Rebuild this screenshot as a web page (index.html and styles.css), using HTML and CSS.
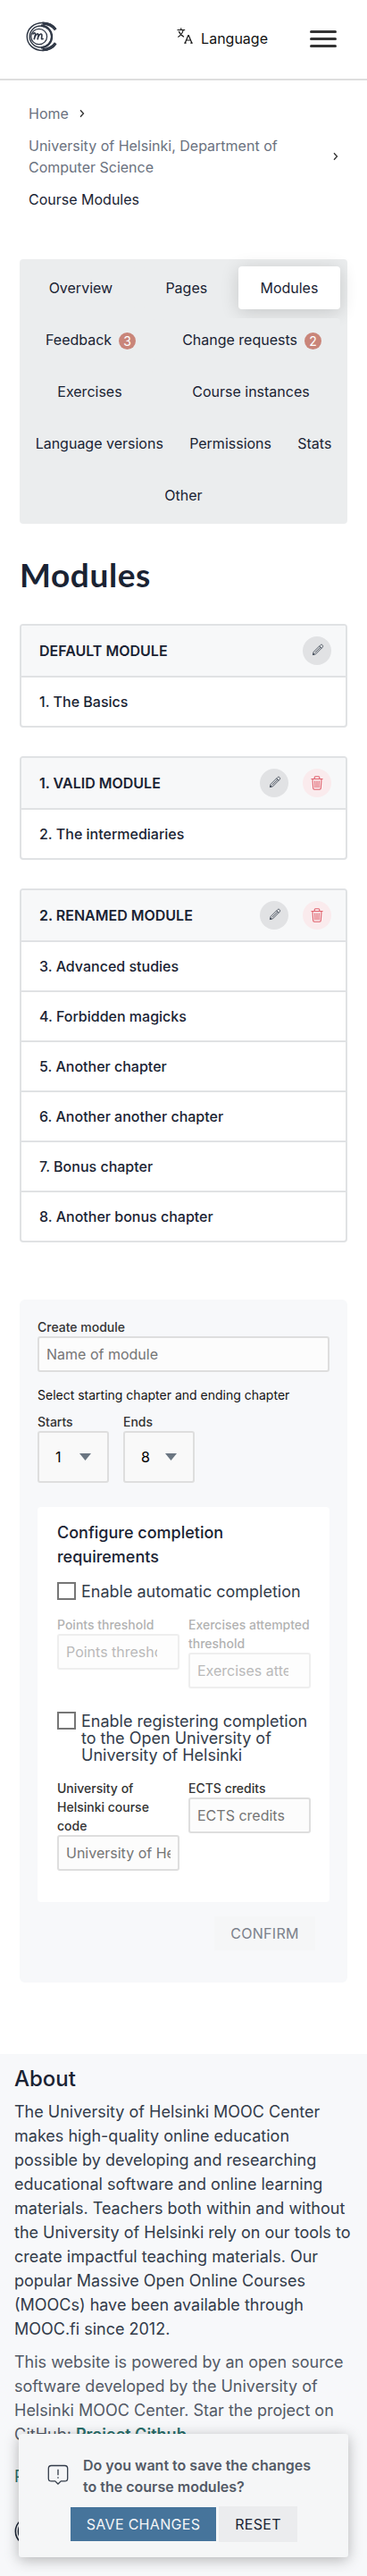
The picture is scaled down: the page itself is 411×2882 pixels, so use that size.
FILE: index.html
```html
<!DOCTYPE html>
<html lang="en">
<head>
<meta charset="utf-8">
<title>Course Modules</title>
<link rel="stylesheet" href="styles.css">
</head>
<body>
<svg class="defs" aria-hidden="true">
  <symbol id="pencil" viewBox="0 0 16 16">
    <path d="M1.600 14.400l.9-3.700L11.200 2c.8-.8 2-.8 2.700 0s.8 1.900 0 2.700L5.200 13.500zM4.300 11.800l7.300-7.300M9.900 3.400l2.700 2.700M1.700 14.300l.5-1.800 1.300 1.300z" fill="none" stroke="currentColor" stroke-width="1.100"/>
  </symbol>
  <symbol id="trash" viewBox="0 0 16 16">
    <path d="M1.500 3.500h13M5.200 3.500V1.800Q5.200.8 6.200.8h3.600q1 0 1 1v1.700M3 3.500l.7 10.400q.1 1.300 1.300 1.300h6q1.200 0 1.300-1.300L13 3.500M5.700 5.500l.2 7.800M8 5.500v7.800M10.300 5.500l-.2 7.800" fill="none" stroke="currentColor" stroke-width="1.100"/>
  </symbol>
  <symbol id="mooc" viewBox="0 0 36 34">
    <g fill="none" stroke="currentColor">
      <path d="M33.500 8.500C30.500 4 25.500 1.500 19 1.500 9 1.500 1.300 8 1.300 17S9 32.400 19 32.400c6.500 0 11.500-2.500 14.500-7.300" stroke-width="1.500"/>
      <path d="M33.300 9.300C30 4.700 25 2.300 18.500 2.200M33.300 24.300c-3.300 4.600-8.300 7.200-14.800 7.300" stroke-width="3.200"/>
      <ellipse cx="16.500" cy="17" rx="12.300" ry="12" stroke-width="1.400"/>
      <path d="M17 4.500c7.500 1 12 6 12 12.500S24.500 28.500 17 29.500" stroke-width="2.300"/>
      <ellipse cx="14.700" cy="17" rx="8.900" ry="8.700" stroke-width="1.300"/>
      <path d="M7.500 14.500c1.500-2.500 3.500-2 3 .5l-1.300 5.300M10 17.500c1.500-4 4.300-4.800 4-1.500l-.9 4.300M14 17c1.500-3.700 4.300-4 3.800-.7-.4 2.700-.7 4.200 1.900 3" stroke-width="1.700"/>
    </g>
  </symbol>
</svg>

<header class="topbar">
  <svg class="logo"><use href="#mooc"/></svg>
  <div class="topbar-right">
    <div class="language">
      <svg class="lang-icon" viewBox="0 0 18 18" fill="none" stroke="currentColor" stroke-width="1.100">
        <path d="M.5 2.500h8.700M4.800.3v2.200M7.200 2.700C6.500 6 4.500 8.600 1.300 10.400M2.300 4c1 2.700 3.200 5 5.700 6.300"/>
        <path d="M9.300 17l3.500-8.500h.5L16.800 17M10.500 14h5M8.300 17.200h2.300M15.300 17.200h2.400" stroke-width="1.200"/>
      </svg>
      <span>Language</span>
    </div>
    <div class="burger"><i></i><i></i><i></i></div>
  </div>
</header>

<nav class="crumbs">
  <div class="crumb"><span>Home</span><svg class="chev" viewBox="0 0 6 10"><path d="M1 1.200l3.500 3.800L1 8.800"/></svg></div>
  <div class="crumb"><span>University of Helsinki, Department of Computer Science</span><svg class="chev far" viewBox="0 0 6 10"><path d="M1 1.200l3.500 3.800L1 8.800"/></svg></div>
  <div class="crumb current"><span>Course Modules</span></div>
</nav>

<main class="content">
  <div class="tabs">
    <a class="tab">Overview</a>
    <a class="tab">Pages</a>
    <a class="tab active">Modules</a>
    <a class="tab">Feedback<b class="badge">3</b></a>
    <a class="tab">Change requests<b class="badge">2</b></a>
    <a class="tab">Exercises</a>
    <a class="tab">Course instances</a>
    <a class="tab">Language versions</a>
    <a class="tab">Permissions</a>
    <a class="tab">Stats</a>
    <a class="tab">Other</a>
  </div>

  <h1 class="title">Modules</h1>

  <section class="module">
    <div class="module-head"><h2>Default module</h2><button class="round"><svg><use href="#pencil"/></svg></button></div>
    <div class="chapter">1. The Basics</div>
  </section>
  <section class="module">
    <div class="module-head"><h2>1. Valid module</h2><button class="round"><svg><use href="#pencil"/></svg></button><button class="round danger"><svg><use href="#trash"/></svg></button></div>
    <div class="chapter">2. The intermediaries</div>
  </section>
  <section class="module">
    <div class="module-head"><h2>2. Renamed module</h2><button class="round"><svg><use href="#pencil"/></svg></button><button class="round danger"><svg><use href="#trash"/></svg></button></div>
    <div class="chapter">3. Advanced studies</div>
    <div class="chapter">4. Forbidden magicks</div>
    <div class="chapter">5. Another chapter</div>
    <div class="chapter">6. Another another chapter</div>
    <div class="chapter">7. Bonus chapter</div>
    <div class="chapter">8. Another bonus chapter</div>
  </section>

  <form class="panel">
    <label class="field"><span>Create module</span><input type="text" placeholder="Name of module"></label>
    <div class="hint">Select starting chapter and ending chapter</div>
    <div class="selects">
      <div class="field"><span>Starts</span><div class="select">1<svg viewBox="0 0 13 8"><path d="M0 0h13L6.500 8z"/></svg></div></div>
      <div class="field"><span>Ends</span><div class="select">8<svg viewBox="0 0 13 8"><path d="M0 0h13L6.500 8z"/></svg></div></div>
    </div>
    <div class="config">
      <h3>Configure completion requirements</h3>
      <div class="check"><i class="box"></i><span>Enable automatic completion</span></div>
      <div class="pair thresholds">
        <label class="field"><span>Points threshold</span><input type="number" placeholder="Points threshold" disabled></label>
        <label class="field"><span>Exercises attempted threshold</span><input type="number" placeholder="Exercises attempted threshold" disabled></label>
      </div>
      <div class="check second"><i class="box"></i><span>Enable registering completion to the Open University of University of Helsinki</span></div>
      <div class="pair">
        <label class="field"><span>University of Helsinki course code</span><input type="text" placeholder="University of Helsinki course code"></label>
        <label class="field"><span>ECTS credits</span><input type="number" placeholder="ECTS credits"></label>
      </div>
    </div>
    <button type="button" class="confirm" disabled>Confirm</button>
  </form>
</main>

<footer class="footer">
  <h2>About</h2>
  <p>The University of Helsinki MOOC Center makes high-quality online education possible by developing and researching educational software and online learning materials. Teachers both within and without the University of Helsinki rely on our tools to create impactful teaching materials. Our popular Massive Open Online Courses (MOOCs) have been available through MOOC.fi since 2012.</p>
  <p class="muted">This website is powered by an open source software developed by the University of Helsinki MOOC Center. Star the project on GitHub: <a>Project Github</a>.</p>
  <div class="links"><a>Privacy</a></div>
  <svg class="footer-logo"><use href="#mooc"/></svg>
</footer>

<div class="dialog">
  <div class="message">
    <svg viewBox="0 0 24 24" fill="none" stroke="currentColor" stroke-width="1.300">
      <path d="M4.500 1.500h15q3.200 0 3.200 3.200v11q0 3.200-3.200 3.200h-4.200L12 22l-3.300-3.100H4.500q-3.200 0-3.200-3.200v-11q0-3.200 3.200-3.200zM12 5.700v6.600M12 14.200v1.600"/>
    </svg>
    <p>Do you want to save the changes to the course modules?</p>
  </div>
  <div class="actions"><button class="save">Save changes</button><button class="reset">Reset</button></div>
</div>
</body>
</html>
```
FILE: styles.css
```css
* { box-sizing: border-box; }
body { margin: 0; font-family: Inter, sans-serif; font-size: 16px; color: #1a2333; background: #fff; position: relative; height: 2882px; overflow: hidden; }
h1, h2, h3, p { margin: 0; }
button { border: 0; padding: 0; font: inherit; }
.defs { display: none; }

.topbar { height: 90px; border-bottom: 2px solid #dedede; display: flex; justify-content: space-between; align-items: flex-start; padding: 24px 34px 0 29px; }
.logo { width: 36px; height: 34px; color: #313947; }
.topbar-right { display: flex; gap: 47px; }
.language { display: flex; color: #111; line-height: 24px; padding-top: 7px; gap: 9px; }
.lang-icon { width: 18px; height: 18px; }
.burger { width: 30px; display: grid; gap: 5px; align-content: start; padding-top: 10px; }
.burger i { height: 3px; border-radius: 2px; background: #333; }

.crumbs { padding: 25px 32px 0; color: #6b7280; line-height: 24px; }
.crumb { display: flex; align-items: center; margin-bottom: 12px; }
.crumb.current { color: #1a2333; }
.chev { width: 6px; height: 10px; margin-left: 12px; fill: none; stroke: #333; stroke-width: 1.300; flex: none; }
.chev.far { margin-left: auto; }
.crumb:nth-child(2) span { width: 300px; }

.content { padding: 43px 22px 0; }
.tabs { background: #ebedee; border-radius: 4px; padding: 8px; display: flex; flex-wrap: wrap; gap: 10px; }
.tab { flex: 1 0 auto; height: 48px; padding: 0 8px; display: flex; align-items: center; justify-content: center; background: #ebedee; border-radius: 4px; }
.tab.active { background: #fff; box-shadow: 0 3px 20px rgba(0, 0, 0, .16); }
.badge { width: 19px; height: 19px; border-radius: 50%; margin: 2px 0 0 8px; background: #c98579; color: #fff; font-size: 14px; font-weight: 400; line-height: 19px; text-align: center; }

.title { font-family: Lato, sans-serif; font-size: 37px; font-weight: 700; line-height: 46px; letter-spacing: .6px; margin: 34px 0 32px 0; }

.module { border: 2px solid #e0e2e4; border-radius: 4px; margin-bottom: 32px; overflow: hidden; }
.module-head { height: 56px; background: #f7f8f9; display: flex; align-items: center; gap: 16px; padding: 0 16px 0 20px; }
.module-head h2 { flex: 1; font-size: 16px; font-weight: 600; text-transform: uppercase; }
.round { width: 32px; height: 32px; border-radius: 50%; background: #e1e2e4; display: grid; place-items: center; color: #4b5360; }
.round svg { width: 16px; height: 16px; padding: 1px; margin: -3px 0 0 2px; }
.round.danger { background: #faebed; color: #e0606c; }
.round.danger svg { padding: 0; margin: 0; }
.chapter { height: 56px; line-height: 54px; border-top: 2px solid #e0e2e4; padding-left: 20px; font-weight: 500; }

.panel { height: 764px; margin-top: 64px; padding: 20px; border-radius: 6px; background: #f7f8fa; display: flex; flex-direction: column; }
.field { display: block; font-size: 14px; font-weight: 500; line-height: 21px; color: #333; }
.field span { display: block; }
.field input { display: block; width: 100%; height: 40px; border: 2px solid #dedede; border-radius: 3px; padding: 0 8px; background: #fcfcfc; font: 400 16px Inter, sans-serif; }
.field input::placeholder { color: #757575; }
.hint { font-size: 14px; line-height: 21px; margin-top: 15px; color: #111; }
.selects { display: flex; gap: 16px; margin-top: 9px; }
.select { width: 80px; height: 58px; border: 2px solid #dedede; border-radius: 3px; background: #f9f9f9; display: flex; align-items: center; justify-content: space-between; padding: 0 18px; font-size: 16px; font-weight: 400; color: #000; }
.select svg { width: 13px; height: 8px; fill: #6b7682; }
.config { height: 442px; margin-top: 27px; padding: 15px 22px 0; background: #fff; border-radius: 4px; }
.config h3 { font-size: 18px; font-weight: 500; line-height: 27px; margin-bottom: 15px; }
.check { display: flex; gap: 6px; line-height: 19px; font-size: 18px; color: #333c4a; }
.check span { padding-top: 1px; }
.box { flex: none; width: 21px; height: 20px; border: 2px solid #767676; background: #fff; }
.pair { display: grid; grid-template-columns: 137px 137px; gap: 10px; align-items: start; }
.thresholds { margin-top: 17px; opacity: .5; }
.thresholds .field { color: #666; }
.thresholds .field input { border-color: #dedede; }
.check.second { margin: 26px 0 17px; }
.confirm { width: 113px; height: 38px; margin: 16px 16px 0 auto; background: #f5f6f7; color: #7b818b; text-transform: uppercase; letter-spacing: .3px; }

.footer { height: 584px; margin-top: 80px; padding: 10px 16px; background: #f7f8fa; font-size: 18px; line-height: 27px; color: #333c4a; }
.footer h2 { font-size: 24px; font-weight: 500; line-height: 36px; margin-bottom: 5px; color: #1a2333; }
.footer .muted { margin-top: 10px; color: #535a66; }
.footer a { color: #2a6f6b; }
.footer .muted a { font-weight: 600; }
.links { margin-top: 20px; font-size: 18px; }
.footer-logo { display: block; width: 38px; height: 36px; margin-top: 30px; color: #1a2333; }

.dialog { position: absolute; left: 21px; top: 2723px; width: 369px; height: 138px; background: #f5f6f7; border-radius: 3px; box-shadow: 0 3px 16px rgba(0, 0, 0, .28); padding-top: 23px; }
.message { display: flex; gap: 16px; padding-left: 32px; font-weight: 600; line-height: 24px; color: #535a66; }
.message svg { width: 24px; height: 24px; margin-top: 11px; color: #333c4a; }
.message p { width: 265px; }
.actions { display: flex; align-items: center; gap: 3px; margin: 10px 0 0 58px; }
.actions button { text-transform: uppercase; letter-spacing: .3px; }
.save { width: 163px; height: 38px; background: #46749b; color: #f5f6f7; }
.reset { width: 88px; height: 40px; background: #ebecee; color: #1a2333; }
```
